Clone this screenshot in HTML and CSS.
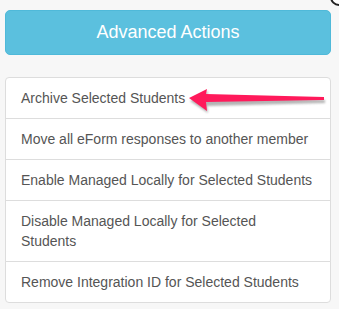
FILE: index.html
```html
<!DOCTYPE html>
<html>
<head>
<meta charset="utf-8">
<link rel="stylesheet" href="styles.css">
</head>
<body>
<div class="panel">
  <button class="btn-advanced">Advanced Actions</button>
  <div class="list-group">
    <a class="list-item">Archive Selected Students</a>
    <a class="list-item">Move all eForm responses to another member</a>
    <a class="list-item">Enable Managed Locally for Selected Students</a>
    <a class="list-item">Disable Managed Locally for Selected Students</a>
    <a class="list-item">Remove Integration ID for Selected Students</a>
  </div>
</div>
<svg class="arrow" width="150" height="30" viewBox="0 0 150 30">
  <defs>
    <filter id="sh" x="-10%" y="-50%" width="120%" height="200%">
      <feGaussianBlur stdDeviation="1.2"/>
    </filter>
  </defs>
  <path d="M4 13 L22 3 L21 9 L139 12 L139 15 L21 18 L22 25 Z" fill="#777" opacity="0.55" filter="url(#sh)" transform="translate(1,3)"/>
  <path d="M4 13 L22 4 L21 9 L139 12 L139 15 L21 17 L22 26 Z" fill="#ff1a5b"/>
</svg>
<div class="cursor"></div>
</body>
</html>
```
FILE: styles.css
```css
html, body {
  margin: 0;
  padding: 0;
  background: #f7f7f7;
  font-family: "Liberation Sans", Arial, sans-serif;
  overflow: hidden;
}
.panel {
  padding: 10px 8px 0 5px;
  display: flex;
  flex-direction: column;
  gap: 22px;
  width: 326px;
}
.btn-advanced {
  display: block;
  width: 326px;
  height: 45px;
  background: #5bc0de;
  border: 1px solid #4fb9d9;
  border-radius: 5px;
  color: #fff;
  font-family: "Liberation Sans", Arial, sans-serif;
  font-size: 18px;
  padding: 0;
  line-height: 43px;
}
.list-group {
  display: flex;
  flex-direction: column;
  width: 326px;
}
.list-item {
  display: block;
  background: #fff;
  border: 1px solid #ddd;
  margin-bottom: -1px;
  padding: 10px 15px;
  font-size: 14px;
  line-height: 20px;
  color: #555;
}
.list-item:first-child {
  border-radius: 4px 4px 0 0;
}
.list-item:last-child {
  border-radius: 0 0 4px 4px;
  margin-bottom: 0;
}
.arrow {
  position: absolute;
  left: 185px;
  top: 85px;
}
.cursor {
  position: absolute;
  left: 330px;
  top: -12px;
  width: 14px;
  height: 14px;
  border: 2px solid #222;
  border-radius: 50%;
  background: #fff;
}
```
